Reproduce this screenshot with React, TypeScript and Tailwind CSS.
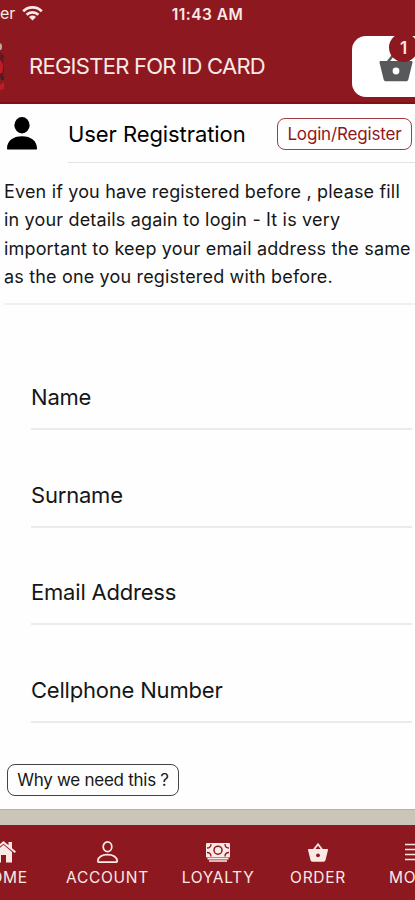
import type { ReactNode } from 'react';

const fields = ['Name', 'Surname', 'Email Address', 'Cellphone Number'];

function WifiIcon() {
  return (
    <svg width="21" height="16" viewBox="0 0 21 16" fill="none" stroke="currentColor" strokeWidth="2.7">
      <path d="M1.2 6.2a13.2 13.2 0 0 1 18.6 0" />
      <path d="M4.6 9.7a8.4 8.4 0 0 1 11.8 0" />
      <path d="M10.5 15.4 7 11.9a5 5 0 0 1 7 0z" fill="currentColor" stroke="none" />
    </svg>
  );
}

function BasketIcon() {
  return (
    <svg width="34" height="32" viewBox="0 0 34 32" fill="none">
      <path d="M8 13 16.5 2 25 13" stroke="#58595b" strokeWidth="2.5" />
      <path
        d="M1.8 11h30.400c1 0 1.500.7 1.300 1.600l-4.100 16.600c-.3 1.400-1.200 2-2.500 2H7.100c-1.300 0-2.200-.6-2.500-2L.5 12.600c-.2-.9.3-1.600 1.300-1.600z"
        fill="#58595b"
      />
      <circle cx="17" cy="21" r="3.400" fill="#fff" />
    </svg>
  );
}

function PersonIcon() {
  return (
    <svg width="30" height="33" viewBox="0 0 30 33" fill="currentColor">
      <ellipse cx="15" cy="8.300" rx="7.600" ry="8.200" />
      <path d="M0 31.500c0-7.500 6-12.200 15-12.200s15 4.700 15 12.200c0 .7-.3 1.100-1 1.100H1c-.7 0-1-.4-1-1.100z" />
    </svg>
  );
}

function HomeIcon() {
  return (
    <svg width="25" height="22" viewBox="0 0 25 22" fill="currentColor">
      <path d="M12.500 0 0 10.500l1.300 1.500L12.500 2.700 23.700 12l1.300-1.500-4-3.300V1h-3.500v3.200z" />
      <path d="M12.500 3.800 4 11v10.500h6V14h5v7.500h6V11z" />
    </svg>
  );
}

function AccountIcon() {
  return (
    <svg width="21" height="22" viewBox="0 0 21 22" fill="none" stroke="currentColor" strokeWidth="1.700">
      <ellipse cx="10.500" cy="5.800" rx="4.300" ry="4.900" />
      <path d="M1.800 21.100c-.8 0-1.200-.5-1-1.300.7-3.900 4.500-6.200 9.700-6.200s9 2.300 9.700 6.200c.2.800-.2 1.300-1 1.300z" />
    </svg>
  );
}

function LoyaltyIcon() {
  return (
    <svg width="24" height="19" viewBox="0 0 24 19" fill="none">
      <rect width="24" height="14.500" rx="1" fill="currentColor" />
      <path d="M1.500 15h21v1.600h-21zM3 17.200h18v1.600H3z" fill="currentColor" />
      <circle cx="12" cy="7.200" r="4" stroke="#8e1820" strokeWidth="1.500" />
      <path
        d="M1 5c2.500 0 4-1.500 4-4M23 5c-2.500 0-4-1.500-4-4M1 9.500c2.500 0 4 1.500 4 4M23 9.500c-2.500 0-4 1.500-4 4"
        stroke="#8e1820"
        strokeWidth="1.300"
      />
    </svg>
  );
}

function OrderIcon() {
  return (
    <svg width="20" height="19" viewBox="0 0 20 19" fill="none">
      <path d="M5.500 7 10 1.300 14.500 7" stroke="currentColor" strokeWidth="1.800" />
      <path
        d="M.8 6h18.400c.6 0 .9.4.8 1l-2.500 10c-.3 1.200-.9 1.700-2 1.700h-11c-1.100 0-1.700-.5-2-1.700L0 7c-.1-.6.2-1 .8-1z"
        fill="currentColor"
      />
      <circle cx="10" cy="12.300" r="1.900" fill="#8e1820" />
    </svg>
  );
}

function MenuIcon() {
  return (
    <svg className="ml-1.5" width="22" height="18" viewBox="0 0 22 18" stroke="currentColor" strokeWidth="1.700">
      <path d="M0 1.500h22M0 6.500h22M0 11.500h22M0 16.500h22" />
    </svg>
  );
}

function LogoEdge() {
  return (
    <svg width="5" height="52" viewBox="0 0 5 52">
      <path d="M0 2c2 1 3 4 1 7H0z" fill="#b9a7a2" />
      <path d="M0 11c3 1 4 6 3 12l1 5-1 10H0z" fill="#6b151d" />
      <path d="M0 19c3 2 4 8 2 13H0zM0 44l4-3v7l-4 1z" fill="#c21a27" />
      <path d="M2 14h1.500v3H2zM1 35h3v4H1z" fill="#34262a" />
    </svg>
  );
}

function Tab({ label, icon, className }: { label: string; icon: ReactNode; className: string }) {
  return (
    <button type="button" className={`flex shrink-0 flex-col items-center ${className}`}>
      <span className="flex h-[22px] items-center">{icon}</span>
      <span className="mt-[5px] text-[15.5px] leading-5 tracking-[0.7px] whitespace-nowrap">{label}</span>
    </button>
  );
}

export default function App() {
  return (
    <div className="flex h-[900px] w-[415px] flex-col overflow-hidden bg-[#fefefe] font-['Inter',sans-serif] text-[#161616]">
      <header className="h-[104px] shrink-0 border-b-2 border-[#850d15] bg-[#8e1820] text-[#fbe9e6]">
        <div className="grid h-[30px] grid-cols-[1fr_auto_1fr] items-center">
          <div className="-mt-1 flex items-center gap-[7px]">
            <span className="text-base">er</span>
            <WifiIcon />
          </div>
          <span className="text-[15.5px] font-semibold tracking-[0.45px]">11:43 AM</span>
        </div>
        <div className="flex h-[73px] items-center">
          <LogoEdge />
          <h1 className="ml-[24px] text-[22px] tracking-[-0.73px] whitespace-nowrap">REGISTER FOR ID CARD</h1>
          <div className="relative ml-auto flex h-[61px] w-[63px] shrink-0 items-end rounded-l-[14px] bg-white pb-[15px] pl-[27px]">
            <BasketIcon />
            <span className="absolute top-[-3px] right-[-3px] flex size-[29px] items-center justify-center rounded-full bg-[#8e1820] pt-0.5 text-[17px] font-semibold">
              1
            </span>
          </div>
        </div>
      </header>

      <main className="flex h-[705px] shrink-0 flex-col">
        <div className="flex h-[59px] shrink-0 items-stretch pl-[7px] text-black">
          <div className="flex w-[61px] items-center">
            <PersonIcon />
          </div>
          <div className="flex flex-1 items-center justify-between border-b border-[#e3e3e3] pr-[3px]">
            <h2 className="pt-[3px] text-[22px] tracking-[-0.08px] whitespace-nowrap">User Registration</h2>
            <button
              type="button"
              className="mt-px h-8 w-[135px] rounded-lg border border-[#a33b43] pt-px text-[17px] leading-6 tracking-[-0.15px] whitespace-nowrap text-[#8e1820]"
            >
              Login/Register
            </button>
          </div>
        </div>
        <p className="ml-1 h-[142px] shrink-0 border-b-2 border-[#f0f0f0] pt-[15px] text-[18px] leading-[28.4px] tracking-[0.17px] whitespace-nowrap">
          Even if you have registered before , please fill
          <br />
          in your details again to login - It is very
          <br />
          important to keep your email address the same
          <br />
          as the one you registered with before.
        </p>
        <form className="mr-[3px] ml-[31px] pt-[27px]">
          {fields.map((field) => (
            <label
              key={field}
              className="flex h-[97.8px] items-end border-b-2 border-[#ebebeb] pb-4 text-[22px] leading-[30px] tracking-[-0.2px]"
            >
              {field}
            </label>
          ))}
        </form>
        <button
          type="button"
          className="mt-[41px] ml-[7px] h-8 w-[172px] shrink-0 rounded-lg border border-[#444] text-[17px] leading-6 tracking-[-0.27px] whitespace-nowrap"
        >
          Why we need this ?
        </button>
      </main>

      <div className="h-4 shrink-0 border-t border-[#b5afa5] bg-[#cbc4b8]" />
      <nav className="flex h-[75px] shrink-0 items-start bg-[#8e1820] pt-4 text-[#fbe9e6]">
        <Tab label="HOME" icon={<HomeIcon />} className="-ml-[24px] w-[54px]" />
        <Tab label="ACCOUNT" icon={<AccountIcon />} className="ml-[36px] w-[83px]" />
        <Tab label="LOYALTY" icon={<LoyaltyIcon />} className="ml-[32px] w-[74px]" />
        <Tab label="ORDER" icon={<OrderIcon />} className="ml-[34px] w-[58px]" />
        <Tab label="MORE" icon={<MenuIcon />} className="ml-[40px] w-[52px]" />
      </nav>
    </div>
  );
}
